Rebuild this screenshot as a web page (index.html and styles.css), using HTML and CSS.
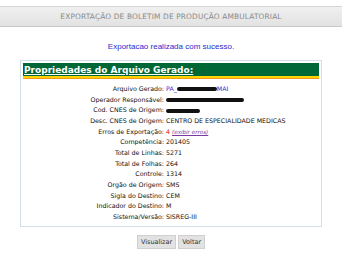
FILE: index.html
```html
<!DOCTYPE html>
<html lang="pt-BR">
<head>
    <meta charset="UTF-8">
    <title>Exportação de Boletim</title>
    <link rel="stylesheet" href="styles.css">
</head>
<body>
    <div class="titlebar">EXPORTAÇÃO DE BOLETIM DE PRODUÇÃO AMBULATORIAL</div>
    <p class="msg">Exportacao realizada com sucesso.</p>
    <div class="box">
        <div class="box-head">Propriedades do Arquivo Gerado:</div>
        <table class="props">
            <tr><th>Arquivo Gerado:</th><td class="blue">PA_<span class="scrib w1"></span>MAI</td></tr>
            <tr><th>Operador Responsável:</th><td><span class="scrib w2"></span></td></tr>
            <tr><th>Cod. CNES de Origem:</th><td><span class="scrib w3"></span></td></tr>
            <tr><th>Desc. CNES de Origem:</th><td>CENTRO DE ESPECIALIDADE MEDICAS</td></tr>
            <tr><th>Erros de Exportação:</th><td><span class="red">4</span> <a href="#" class="err">(exibir erros)</a></td></tr>
            <tr><th>Competência:</th><td>201405</td></tr>
            <tr><th>Total de Linhas:</th><td>5271</td></tr>
            <tr><th>Total de Folhas:</th><td>264</td></tr>
            <tr><th>Controle:</th><td>1314</td></tr>
            <tr><th>Orgão de Origem:</th><td>SMS</td></tr>
            <tr><th>Sigla do Destino:</th><td>CEM</td></tr>
            <tr><th>Indicador do Destino:</th><td>M</td></tr>
            <tr><th>Sistema/Versão:</th><td>SISREG-III</td></tr>
        </table>
    </div>
    <div class="actions">
        <button>Visualizar</button>
        <button>Voltar</button>
    </div>
</body>
</html>
```

FILE: styles.css
```css
body { margin: 0; background: #fff; font-family: "DejaVu Sans", Verdana, sans-serif; color: #111; }
.titlebar { margin-top: 6px; height: 19px; line-height: 19px; text-align: center; font-size: 7.4px; letter-spacing: 0.15px; color: #8a8a8a; border-top: 1px solid #d4d4d4; border-bottom: 1px solid #c8c8c8; background: linear-gradient(#f0f0f0, #e2e2e2); }
.msg { margin: 15px 0 0; text-align: center; font-family: "Liberation Sans", Arial, sans-serif; font-size: 8px; color: #2a2ad0; }
.box { margin: 9px 20px 0; border: 1px solid #d3dee8; padding: 2px 2px 4px; }
.box-head { background: #006837; color: #fff; font-weight: bold; font-size: 9px; height: 13px; line-height: 14px; padding-left: 1px; text-decoration: underline; border-bottom: 2px solid #ffd400; box-shadow: 0 1px 0 #f39a1c; margin-bottom: 5px; }
.props { border-collapse: collapse; font-size: 6.3px; }
.props th { width: 141px; text-align: right; font-weight: normal; padding: 0 2px 0 0; height: 10.7px; white-space: nowrap; }
.props td { padding: 0; white-space: nowrap; }
.blue { color: #2a2ad0; }
.red { color: #e02020; }
.err { color: #7a3aa0; font-style: italic; font-size: 5.6px; }
.scrib { display: inline-block; height: 4px; background: #111; border-radius: 2px; vertical-align: middle; }
.w1 { width: 40px; }
.w2 { width: 78px; }
.w3 { width: 34px; }
.actions { margin-top: 8px; text-align: center; font-size: 0; }
.actions button { font-family: "DejaVu Sans", Verdana, sans-serif; font-size: 6.5px; color: #333; background: #e2e2e2; border: 1px solid #d0d0d0; padding: 2px 3px; margin: 0 1px; }
```
